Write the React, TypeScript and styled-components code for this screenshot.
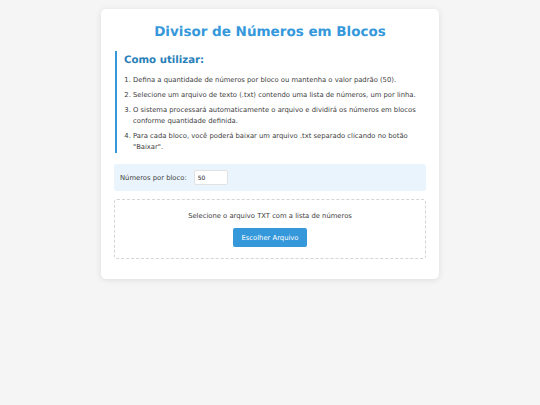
import React from 'react';
import styled, { createGlobalStyle } from 'styled-components';

const GlobalStyle = createGlobalStyle`
  body {
    margin: 0;
    background-color: #f5f5f5;
    font-family: 'DejaVu Sans', Verdana, sans-serif;
    color: #333;
    text-rendering: geometricPrecision;
  }
`;

const Page = styled.div`
  display: flex;
  justify-content: center;
  align-items: flex-start;
  padding-top: 9px;
  min-height: 405px;
  box-sizing: border-box;
`;

const Card = styled.div`
  width: 338px;
  box-sizing: border-box;
  padding: 13px 13px 20px;
  background-color: white;
  border-radius: 5px;
  box-shadow: 0 1px 6px rgba(0, 0, 0, 0.1);
`;

const Title = styled.h1`
  margin: 0 0 9px;
  text-align: center;
  font-size: 13.5px;
  line-height: 20px;
  font-weight: bold;
  color: #3498db;
`;

const Instructions = styled.div`
  border-left: 2.5px solid #3498db;
  padding: 2px 0 0 7px;
  margin-left: 1px;
`;

const SubTitle = styled.h2`
  margin: 0 0 6px;
  font-size: 10.2px;
  line-height: 16px;
  font-weight: bold;
  color: #2980b9;
`;

const Steps = styled.ol`
  margin: 0;
  padding-left: 9px;
  font-size: 6.8px;
  line-height: 11px;
  color: #3d3d3d;
`;

const Step = styled.li`
  margin-bottom: 4px;
  &:last-child {
    margin-bottom: 0;
  }
`;

const Settings = styled.div`
  display: flex;
  align-items: center;
  gap: 7px;
  margin-top: 11px;
  padding: 6px;
  background-color: #eaf4fc;
  border-radius: 3px;
  font-size: 6.8px;
  color: #3d3d3d;
`;

const NumberInput = styled.input`
  width: 34px;
  height: 15px;
  box-sizing: border-box;
  padding: 0 3px;
  border: 1px solid #e2e2e2;
  border-radius: 2px;
  background: white;
  font-family: 'DejaVu Sans', Verdana, sans-serif;
  font-size: 6px;
  color: #222;
  outline: none;
`;

const DropZone = styled.div`
  display: flex;
  flex-direction: column;
  align-items: center;
  gap: 6px;
  margin-top: 8px;
  padding: 11px 0 11px;
  border: 1px dashed #d5d5d5;
  border-radius: 3px;
  font-size: 6.8px;
  line-height: 11px;
  color: #3d3d3d;
`;

const FileButton = styled.button`
  width: 74px;
  height: 19px;
  padding: 0;
  border: none;
  border-radius: 2px;
  background-color: #3498db;
  color: white;
  font-family: 'DejaVu Sans', Verdana, sans-serif;
  font-size: 6.8px;
  cursor: pointer;
`;

const steps = [
  'Defina a quantidade de números por bloco ou mantenha o valor padrão (50).',
  'Selecione um arquivo de texto (.txt) contendo uma lista de números, um por linha.',
  'O sistema processará automaticamente o arquivo e dividirá os números em blocos conforme quantidade definida.',
  'Para cada bloco, você poderá baixar um arquivo .txt separado clicando no botão "Baixar".',
];

function App(): React.ReactElement {
  return (
    <>
      <GlobalStyle />
      <Page>
        <Card>
          <Title>Divisor de Números em Blocos</Title>
          <Instructions>
            <SubTitle>Como utilizar:</SubTitle>
            <Steps>
              {steps.map((s) => (
                <Step key={s}>{s}</Step>
              ))}
            </Steps>
          </Instructions>
          <Settings>
            <label htmlFor="block-size">Números por bloco:</label>
            <NumberInput id="block-size" type="text" defaultValue="50" />
          </Settings>
          <DropZone>
            <span>Selecione o arquivo TXT com a lista de números</span>
            <FileButton type="button">Escolher Arquivo</FileButton>
          </DropZone>
        </Card>
      </Page>
    </>
  );
}

export default App;
